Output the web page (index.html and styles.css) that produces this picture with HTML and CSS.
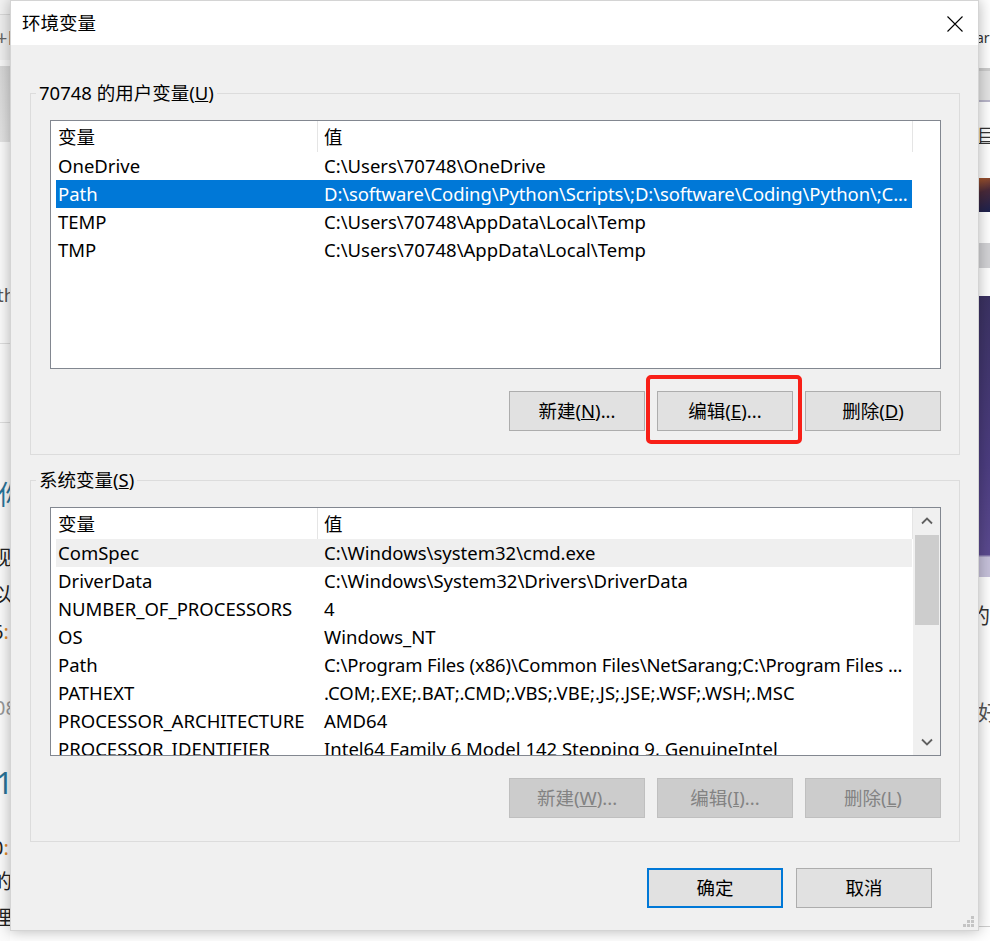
FILE: index.html
```html
<!DOCTYPE html>
<html>

<head lang="zh-CN">
    <meta charset="UTF-8">
    <title>环境变量</title>
    <link rel="stylesheet" href="styles.css">
</head>

<body>
    <div class="desk">
        <!-- 左边露出的网页 -->
        <div class="side side-left">
            <div class="l-top"></div>
            <div class="l-menu">+F</div>
            <div class="l-gap"></div>
            <div class="l-shade"></div>
            <div class="l-page">th</div>
            <div class="l-page2"></div>
            <div class="l-article">
                <div class="ln ln-title" style="margin-top: 54px">你</div>
                <div class="ln" style="margin-top: 30px">现</div>
                <div class="ln" style="margin-top: 7px">以</div>
                <div class="ln" style="margin-top: 7px">6<span class="orange">:</span></div>
                <div class="ln ln-gray" style="margin-top: 46px">08</div>
                <div class="ln ln-big" style="margin-top: 40px">1</div>
                <div class="ln" style="margin-top: 30px">0<span class="orange">:</span></div>
                <div class="ln" style="margin-top: 4px">的</div>
                <div class="ln" style="margin-top: 6px">理</div>
            </div>
        </div>

        <!-- 环境变量对话框 -->
        <div class="dialog">
            <div class="dialog-title">
                <span class="dialog-caption">环境变量</span>
                <span class="dialog-close">
                    <svg width="16" height="16" viewBox="0 0 16 16">
                        <path d="M0.5 0.5 L15.5 15.5 M15.5 0.5 L0.5 15.5" stroke="#000" stroke-width="1.1" fill="none"/>
                    </svg>
                </span>
            </div>

            <div class="dialog-body">
                <fieldset class="group">
                    <legend>70748 的用户变量(<u>U</u>)</legend>
                    <div class="list">
                        <div class="list-main">
                            <div class="list-head">
                                <span class="head-name">变量</span>
                                <span class="head-value">值</span>
                            </div>
                            <div class="list-row">
                                <span class="cell-name">OneDrive</span>
                                <span class="cell-value">C:\Users\70748\OneDrive</span>
                            </div>
                            <div class="list-row selected">
                                <span class="cell-name">Path</span>
                                <span class="cell-value cell-long">D:\software\Coding\Python\Scripts\;D:\software\Coding\Python\;C...</span>
                            </div>
                            <div class="list-row">
                                <span class="cell-name">TEMP</span>
                                <span class="cell-value">C:\Users\70748\AppData\Local\Temp</span>
                            </div>
                            <div class="list-row">
                                <span class="cell-name">TMP</span>
                                <span class="cell-value">C:\Users\70748\AppData\Local\Temp</span>
                            </div>
                        </div>
                    </div>
                    <div class="group-buttons">
                        <a class="btn" href="javascript:void(0);">新建(<u>N</u>)...</a>
                        <a class="btn" href="javascript:void(0);">编辑(<u>E</u>)...</a>
                        <a class="btn" href="javascript:void(0);">删除(<u>D</u>)</a>
                        <div class="mark"></div>
                    </div>
                </fieldset>

                <fieldset class="group group-sys">
                    <legend>系统变量(<u>S</u>)</legend>
                    <div class="list">
                        <div class="list-main">
                            <div class="list-head">
                                <span class="head-name">变量</span>
                                <span class="head-value">值</span>
                            </div>
                            <div class="list-row hover">
                                <span class="cell-name">ComSpec</span>
                                <span class="cell-value">C:\Windows\system32\cmd.exe</span>
                            </div>
                            <div class="list-row">
                                <span class="cell-name">DriverData</span>
                                <span class="cell-value">C:\Windows\System32\Drivers\DriverData</span>
                            </div>
                            <div class="list-row">
                                <span class="cell-name">NUMBER_OF_PROCESSORS</span>
                                <span class="cell-value">4</span>
                            </div>
                            <div class="list-row">
                                <span class="cell-name">OS</span>
                                <span class="cell-value">Windows_NT</span>
                            </div>
                            <div class="list-row">
                                <span class="cell-name">Path</span>
                                <span class="cell-value cell-long">C:\Program Files (x86)\Common Files\NetSarang;C:\Program Files ...</span>
                            </div>
                            <div class="list-row">
                                <span class="cell-name">PATHEXT</span>
                                <span class="cell-value">.COM;.EXE;.BAT;.CMD;.VBS;.VBE;.JS;.JSE;.WSF;.WSH;.MSC</span>
                            </div>
                            <div class="list-row">
                                <span class="cell-name">PROCESSOR_ARCHITECTURE</span>
                                <span class="cell-value">AMD64</span>
                            </div>
                            <div class="list-row">
                                <span class="cell-name">PROCESSOR_IDENTIFIER</span>
                                <span class="cell-value">Intel64 Family 6 Model 142 Stepping 9, GenuineIntel</span>
                            </div>
                        </div>
                        <div class="scrollbar">
                            <div class="sb-arrow">
                                <svg width="12" height="8" viewBox="0 0 12 8">
                                    <path d="M1 6.5 L6 1.5 L11 6.5" stroke="#606060" stroke-width="1.8" fill="none"/>
                                </svg>
                            </div>
                            <div class="sb-thumb"></div>
                            <div class="sb-track"></div>
                            <div class="sb-arrow">
                                <svg width="12" height="8" viewBox="0 0 12 8">
                                    <path d="M1 1.5 L6 6.5 L11 1.5" stroke="#606060" stroke-width="1.8" fill="none"/>
                                </svg>
                            </div>
                        </div>
                    </div>
                    <div class="group-buttons">
                        <a class="btn disabled" href="javascript:void(0);">新建(<u>W</u>)...</a>
                        <a class="btn disabled" href="javascript:void(0);">编辑(<u>I</u>)...</a>
                        <a class="btn disabled" href="javascript:void(0);">删除(<u>L</u>)</a>
                    </div>
                </fieldset>

                <div class="dialog-footer">
                    <a class="btn btn-ok" href="javascript:void(0);">确定</a>
                    <a class="btn" href="javascript:void(0);">取消</a>
                </div>
            </div>

            <svg class="grip" width="12" height="12" viewBox="0 0 12 12">
                <rect x="8" y="0" width="3" height="3" fill="#c4c4c4"/>
                <rect x="4" y="4" width="3" height="3" fill="#c4c4c4"/>
                <rect x="8" y="4" width="3" height="3" fill="#c4c4c4"/>
                <rect x="0" y="8" width="3" height="3" fill="#c4c4c4"/>
                <rect x="4" y="8" width="3" height="3" fill="#c4c4c4"/>
                <rect x="8" y="8" width="3" height="3" fill="#c4c4c4"/>
            </svg>
        </div>

        <!-- 右边露出的网页 -->
        <div class="side side-right">
            <div class="r-top">ar</div>
            <div class="r-bar"></div>
            <div class="r-link">目</div>
            <div class="r-thumb"></div>
            <div class="r-btn"></div>
            <div class="r-hero"></div>
            <div class="r-text">的</div>
            <div class="r-text r-text2">好</div>
            <div class="r-line"></div>
        </div>
    </div>
</body>

</html>
```

FILE: styles.css
```css
* {
    box-sizing: border-box;
}

body {
    margin: 0;
    background: #fff;
    font-family: "Noto Sans", "Noto Sans CJK SC", sans-serif;
    font-size: 18.5px;
    color: #000;
    overflow: hidden;
}

a {
    text-decoration: none;
    color: #000;
}

.desk {
    display: grid;
    grid-template-columns: 10px 969px 11px;
    width: 990px;
    height: 941px;
    overflow: hidden;
}

/* 背景网页 */
.side {
    display: flex;
    flex-direction: column;
    overflow: hidden;
    white-space: nowrap;
    background: #fbfbfb;
}

.l-top {
    height: 15px;
    background: #f3f3f3;
    border-bottom: 1px solid #d9d9d9;
}

.l-menu {
    height: 45px;
    background: #efefef;
    color: #666;
    font-size: 20px;
    line-height: 45px;
    margin-left: -4px;
}

.l-gap {
    height: 6px;
    background: #f7f7f7;
}

.l-shade {
    height: 76px;
    background: linear-gradient(180deg, #d7d7d7, #e3e3e3);
}

.l-page {
    height: 202px;
    padding-top: 141px;
    line-height: 24px;
    color: #555;
    border-bottom: 1px solid #dedede;
    margin-left: -3px;
}

.l-page2 {
    height: 79px;
    border-bottom: 1px solid #dedede;
}

.l-article {
    flex: 1;
    color: #222;
}

.ln {
    height: 30px;
    line-height: 30px;
    font-size: 20px;
    margin-left: -8px;
}

.ln-title {
    height: 36px;
    line-height: 36px;
    font-size: 27px;
    color: #2a7398;
    margin-left: -2px;
}

.ln-big {
    height: 40px;
    line-height: 40px;
    font-size: 30px;
    color: #2a7398;
    margin-left: -4px;
}

.ln-gray {
    color: #999;
    margin-left: -6px;
}

.orange {
    color: #e08a2c;
}

.side-right {
    background: #fff;
}

.r-top {
    height: 68px;
    padding-top: 28px;
    line-height: 20px;
    font-size: 14px;
    color: #333;
    margin-left: -3px;
}

.r-bar {
    height: 34px;
    background: #e4e4e4;
    border-top: 3px solid #cdcdcd;
    border-bottom: 2px solid #b9b6ca;
}

.r-link {
    height: 30px;
    margin-top: 18px;
    line-height: 30px;
    font-size: 18px;
    text-decoration: underline;
    color: #333;
    margin-left: -2px;
}

.r-thumb {
    height: 34px;
    margin-top: 28px;
    background: linear-gradient(160deg, #a5562c 0%, #4a2a3a 40%, #1c2250 100%);
}

.r-btn {
    height: 25px;
    margin-top: 31px;
    background: #d3d3d6;
}

.r-hero {
    height: 281px;
    margin-top: 28px;
    background: linear-gradient(180deg, #3b3262 0%, #4c3d80 60%, #5b4a8f 92%, #c6c1da 93%, #c6c1da 100%);
}

.r-text {
    height: 30px;
    margin-top: 23px;
    line-height: 30px;
    font-size: 21px;
    color: #333;
    margin-left: -10px;
}

.r-text2 {
    margin-top: 67px;
    color: #555;
    margin-left: -1px;
}

.r-line {
    height: 1px;
    margin-top: 199px;
    background: #cfcfcf;
}

/* 对话框 */
.dialog {
    height: 931px;
    background: #f0f0f0;
    border: 1px solid #d4d4d4;
    box-shadow: 0 0 14px rgba(0, 0, 0, 0.3);
    position: relative;
    z-index: 1;
    display: flex;
    flex-direction: column;
}

.dialog-title {
    height: 44px;
    background: #fff;
    display: flex;
    align-items: center;
    justify-content: space-between;
    padding: 0 15px 0 11px;
}

.dialog-caption {
    line-height: 44px;
}

.dialog-close {
    display: flex;
    padding-top: 1px;
}

.dialog-body {
    flex: 1;
    padding: 36px 0 0 19px;
}

.group {
    width: 930px;
    margin: 0;
    min-width: 0;
    padding: 15px 18px 23px 19px;
    border: 1px solid #dcdcdc;
}

.group legend {
    padding: 0 3px;
    margin-left: -14px;
    line-height: 24px;
}

.group-sys {
    margin-top: 13px;
}

.list {
    height: 249px;
    border: 1px solid #828790;
    background: #fff;
    display: flex;
    overflow: hidden;
}

.list-main {
    flex: 1;
    overflow: hidden;
}

.list-head {
    display: flex;
    height: 31px;
    line-height: 31px;
}

.head-name {
    width: 267px;
    padding-left: 7px;
    border-right: 1px solid #e5e5e5;
}

.head-value {
    width: 595px;
    padding-left: 6px;
    border-right: 1px solid #e5e5e5;
}

.list-row {
    display: flex;
    width: 856px;
    height: 28px;
    line-height: 28px;
    margin-left: 5px;
    white-space: nowrap;
}

.list-row.selected {
    background: #0078d7;
    color: #fff;
}

.list-row.hover {
    background: #efefef;
}

.cell-name {
    width: 262px;
    padding-left: 2px;
    overflow: hidden;
}

.cell-value {
    flex: 1;
    padding-left: 6px;
    overflow: hidden;
}

.cell-long {
    letter-spacing: -0.12px;
}

.scrollbar {
    width: 27px;
    background: #f0f0f0;
    display: flex;
    flex-direction: column;
}

.sb-arrow {
    height: 26px;
    display: flex;
    align-items: center;
    justify-content: center;
}

.sb-thumb {
    height: 90px;
    margin: 1px 1px 0 2px;
    background: #cdcdcd;
}

.sb-track {
    flex: 1;
}

.group-buttons {
    display: flex;
    justify-content: flex-end;
    gap: 12px;
    margin-top: 22px;
    position: relative;
}

.btn {
    display: block;
    width: 136px;
    height: 40px;
    line-height: 38px;
    text-align: center;
    background: #e1e1e1;
    border: 1px solid #adadad;
}

.btn.disabled {
    background: #cccccc;
    border-color: #bfbfbf;
    color: #838383;
}

.btn-ok {
    border: 2px solid #0078d7;
    line-height: 36px;
}

/* 红色标注框 */
.mark {
    position: absolute;
    left: 596px;
    top: -16px;
    width: 156px;
    height: 69px;
    border: 4px solid #f81f17;
    border-radius: 5px;
}

.dialog-footer {
    display: flex;
    justify-content: flex-end;
    gap: 13px;
    margin-top: 26px;
    padding-right: 46px;
}

.grip {
    position: absolute;
    right: 3px;
    bottom: 2px;
}
```
